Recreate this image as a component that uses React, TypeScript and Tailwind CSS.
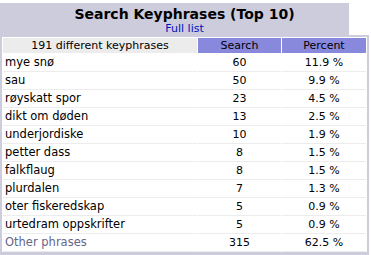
import React from 'react';

// Search keyphrases table, AWStats style
const rows: [string, number, string][] = [
    ['mye snø', 60, '11.9 %'],
    ['sau', 50, '9.9 %'],
    ['røyskatt spor', 23, '4.5 %'],
    ['dikt om døden', 13, '2.5 %'],
    ['underjordiske', 10, '1.9 %'],
    ['petter dass', 8, '1.5 %'],
    ['falkflaug', 8, '1.5 %'],
    ['plurdalen', 7, '1.3 %'],
    ['oter fiskeredskap', 5, '0.9 %'],
    ['urtedram oppskrifter', 5, '0.9 %'],
];

const Row = ({ label, count, pct, muted = false }: { label: string, count: number, pct: string, muted?: boolean }) => (
    <div className="grid grid-cols-[194px_83px_84px] gap-x-px h-[18px]">
        <div className={`pl-[2px] text-[11.5px] leading-[17px] border-b border-[#ececec] ${muted ? 'text-[#666688]' : 'text-black'}`}>{label}</div>
        <div className="text-center leading-[17px] border-b border-[#ececec]">{count}</div>
        <div className="text-center leading-[17px] border-b border-[#ececec]">{pct}</div>
    </div>
);

export default function App() {
    return (
        <div className="w-[371px] h-[255px] bg-white font-['DejaVu_Sans',sans-serif] text-[11px] text-black">
            <div className="w-[369px] pt-[3px]">
                <div className="w-[349px] h-[32px] bg-[#ccccdd] pl-[20px] text-center pt-[3px]">
                    <div className="text-[14px] font-bold leading-[16px]">Search Keyphrases (Top 10)</div>
                    <a className="block text-[11px] leading-[13px] text-[#0011bb]">Full list</a>
                </div>
                <div className="bg-[#ccccdd] px-[2px] pt-[2px] pb-[4px]">
                    <div className="bg-white px-px pt-px">
                        <div className="grid grid-cols-[194px_83px_84px] gap-x-px h-[15px] mb-px">
                            <div className="bg-[#ececec] text-center leading-[15px]">191 different keyphrases</div>
                            <div className="bg-[#8888dd] text-center leading-[15px]">Search</div>
                            <div className="bg-[#8888dd] text-center leading-[15px]">Percent</div>
                        </div>
                        {rows.map(([l, c, p]) => (
                            <Row key={l} label={l} count={c} pct={p} />
                        ))}
                        <Row label="Other phrases" count={315} pct="62.5 %" muted />
                    </div>
                </div>
            </div>
        </div>
    );
}
